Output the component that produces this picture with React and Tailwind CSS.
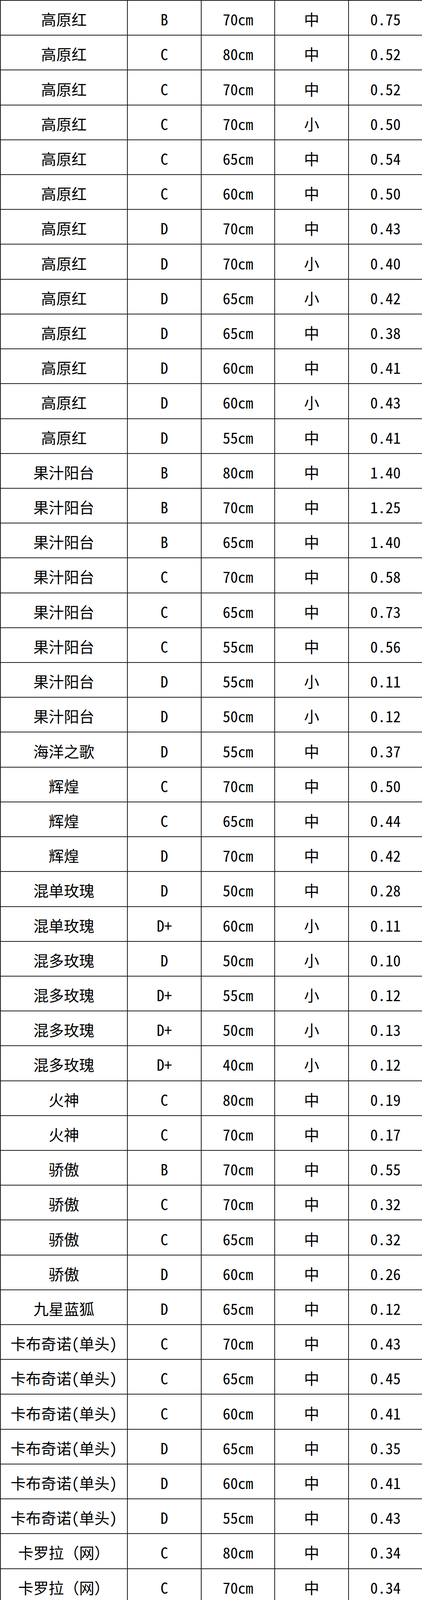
const rows = [
  ['高原红', 'B', '70cm', '中', '0.75'],
  ['高原红', 'C', '80cm', '中', '0.52'],
  ['高原红', 'C', '70cm', '中', '0.52'],
  ['高原红', 'C', '70cm', '小', '0.50'],
  ['高原红', 'C', '65cm', '中', '0.54'],
  ['高原红', 'C', '60cm', '中', '0.50'],
  ['高原红', 'D', '70cm', '中', '0.43'],
  ['高原红', 'D', '70cm', '小', '0.40'],
  ['高原红', 'D', '65cm', '小', '0.42'],
  ['高原红', 'D', '65cm', '中', '0.38'],
  ['高原红', 'D', '60cm', '中', '0.41'],
  ['高原红', 'D', '60cm', '小', '0.43'],
  ['高原红', 'D', '55cm', '中', '0.41'],
  ['果汁阳台', 'B', '80cm', '中', '1.40'],
  ['果汁阳台', 'B', '70cm', '中', '1.25'],
  ['果汁阳台', 'B', '65cm', '中', '1.40'],
  ['果汁阳台', 'C', '70cm', '中', '0.58'],
  ['果汁阳台', 'C', '65cm', '中', '0.73'],
  ['果汁阳台', 'C', '55cm', '中', '0.56'],
  ['果汁阳台', 'D', '55cm', '小', '0.11'],
  ['果汁阳台', 'D', '50cm', '小', '0.12'],
  ['海洋之歌', 'D', '55cm', '中', '0.37'],
  ['辉煌', 'C', '70cm', '中', '0.50'],
  ['辉煌', 'C', '65cm', '中', '0.44'],
  ['辉煌', 'D', '70cm', '中', '0.42'],
  ['混单玫瑰', 'D', '50cm', '中', '0.28'],
  ['混单玫瑰', 'D+', '60cm', '小', '0.11'],
  ['混多玫瑰', 'D', '50cm', '小', '0.10'],
  ['混多玫瑰', 'D+', '55cm', '小', '0.12'],
  ['混多玫瑰', 'D+', '50cm', '小', '0.13'],
  ['混多玫瑰', 'D+', '40cm', '小', '0.12'],
  ['火神', 'C', '80cm', '中', '0.19'],
  ['火神', 'C', '70cm', '中', '0.17'],
  ['骄傲', 'B', '70cm', '中', '0.55'],
  ['骄傲', 'C', '70cm', '中', '0.32'],
  ['骄傲', 'C', '65cm', '中', '0.32'],
  ['骄傲', 'D', '60cm', '中', '0.26'],
  ['九星蓝狐', 'D', '65cm', '中', '0.12'],
  ['卡布奇诺(单头)', 'C', '70cm', '中', '0.43'],
  ['卡布奇诺(单头)', 'C', '65cm', '中', '0.45'],
  ['卡布奇诺(单头)', 'C', '60cm', '中', '0.41'],
  ['卡布奇诺(单头)', 'D', '65cm', '中', '0.35'],
  ['卡布奇诺(单头)', 'D', '60cm', '中', '0.41'],
  ['卡布奇诺(单头)', 'D', '55cm', '中', '0.43'],
  ['卡罗拉（网）', 'C', '80cm', '中', '0.34'],
  ['卡罗拉（网）', 'C', '70cm', '中', '0.34'],
  ['莱拉', 'B', '70cm', '中', '1.41'],
  ['莱拉', 'C', '60cm', '中', '1.01'],
  ['洛神', 'C', '70cm', '中', '0.26'],
  ['洛神', 'C+', '75cm', '中', '0.35'],
  ['洛神', 'C+', '70cm', '中', '0.21'],
  ['洛神', 'C+', '65cm', '中', '0.30'],
  ['洛神', 'C+', '60cm', '中', '0.24'],
  ['洛神', 'D', '65cm', '中', '0.16'],
  ['洛神', 'D+', '55cm', '中', '0.15'],
  ['洛神', 'D+', '50cm', '中', '0.11'],
  ['洛神', 'D+', '45cm', '中', '0.11'],
  ['曼塔', 'B', '70cm', '中', '0.62'],
  ['曼塔', 'B', '65cm', '中', '0.66'],
  ['曼塔', 'C', '70cm', '中', '0.37'],
  ['曼塔', 'C', '65cm', '中', '0.37'],
  ['曼塔', 'D', '60cm', '中', '0.30'],
  ['曼塔', 'D', '55cm', '中', '0.34'],
  ['蜜桃雪山', 'C', '70cm', '大', '0.31'],
  ['蜜桃雪山', 'C', '70cm', '中', '0.16'],
  ['蜜桃雪山', 'C', '65cm', '中', '0.21'],
]

export default function App() {
  return (
    <div className="w-[1080px] h-[5890px] bg-white text-black font-['Noto_Sans_CJK_SC',sans-serif] text-[39px] leading-none grid grid-cols-[325px_189px_188px_189px_189px] grid-rows-[repeat(66,minmax(0,1fr))] border-t-2 border-l-2 border-[#1c1c1c]">
      {rows.map((row, i) =>
        row.map((cell, j) => (
          <div
            key={i + '-' + j}
            className={
              'flex items-center justify-center pt-[6px] border-r-2 border-b-2 border-[#1c1c1c] whitespace-nowrap ' +
              (cell.includes('（') ? '' : "[font-feature-settings:'hwid']")
            }
          >
            {cell}
          </div>
        ))
      )}
    </div>
  )
}
